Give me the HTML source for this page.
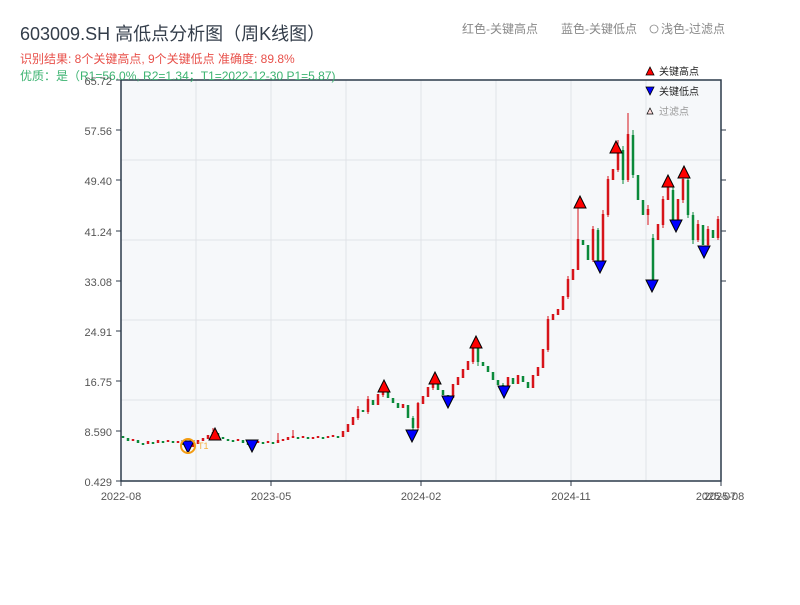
<!DOCTYPE html>
<html><head><meta charset="utf-8"><style>
body{margin:0;background:#fff;width:800px;height:600px;overflow:hidden;font-family:"Liberation Sans","Noto Sans CJK SC",sans-serif}
</style></head><body>
<svg width="800" height="600" xmlns="http://www.w3.org/2000/svg" font-family="Liberation Sans, Noto Sans CJK SC, sans-serif">
<rect x="121" y="80" width="600" height="401" fill="#f6f8fa"/>
<g stroke="#e0e3e8" stroke-width="1">
<line x1="121" y1="160" x2="721" y2="160"/><line x1="121" y1="240" x2="721" y2="240"/><line x1="121" y1="320" x2="721" y2="320"/><line x1="121" y1="400" x2="721" y2="400"/>
<line x1="196" y1="80" x2="196" y2="481"/><line x1="271" y1="80" x2="271" y2="481"/><line x1="346" y1="80" x2="346" y2="481"/><line x1="421" y1="80" x2="421" y2="481"/><line x1="496" y1="80" x2="496" y2="481"/><line x1="571" y1="80" x2="571" y2="481"/><line x1="646" y1="80" x2="646" y2="481"/>
</g>
<path fill="none" stroke="#d7141a" stroke-width="1" d="M213 428V436 M278 433V443 M293 430V438 M358 406V420 M368 396V414 M383 386V397 M418 402V430 M433 378V390 M473 344V364 M548 316V352 M568 276V299 M578 200V242 M593 226V262 M603 210V265 M608 176V217 M618 140V172 M628 113V182 M648 205V225 M663 196V228 M683 176V203 M698 220V242 M708 226V248 M718 216V240"/>
<path fill="none" stroke="#0b8a3a" stroke-width="1" d="M413 416V438 M478 346V366 M503 383V396 M598 228V267 M623 146V184 M633 130V178 M653 234V285 M673 186V224 M688 176V218 M693 212V244"/>
<path fill="none" stroke="#d7141a" stroke-width="2.5" d="M133 439V441 M148 441V444 M158 440V443 M168 440V442 M178 441V443 M193 443V447 M198 440V444 M203 438V441 M208 435V439 M213 432V436 M238 439V441 M253 442V445 M258 441V443 M268 441V443 M278 440V443 M283 439V441 M288 437V440 M293 436V438 M303 436V438 M313 437V439 M318 436V438 M328 436V438 M333 435V437 M343 431V437 M348 424V432 M353 417V425 M358 409V418 M368 399V412 M378 394V405 M383 389V395 M403 404V408 M418 403V428 M423 396V404 M428 387V397 M433 381V388 M453 384V398 M458 377V385 M463 369V378 M468 361V370 M473 347V362 M508 377V386 M518 375V384 M533 375V388 M538 367V376 M543 349V368 M548 319V350 M553 314V320 M558 309V315 M563 296V310 M568 279V297 M573 269V280 M578 239V270 M593 229V260 M603 214V262 M608 179V215 M613 169V180 M618 149V170 M628 134V180 M648 209V215 M658 224V240 M663 199V225 M668 184V200 M678 199V220 M683 179V200 M698 224V240 M708 229V245 M718 219V238"/>
<path fill="none" stroke="#0b8a3a" stroke-width="2.5" d="M123 436V438 M128 438V441 M138 440V443 M143 443V445 M153 442V444 M163 441V443 M173 441V443 M183 442V445 M188 445V447 M218 433V437 M223 437V439 M228 439V441 M233 440V442 M243 440V443 M248 443V445 M263 442V444 M273 442V444 M298 437V439 M308 437V439 M323 437V439 M338 436V438 M363 410V412 M373 400V405 M388 390V398 M393 398V403 M398 403V408 M408 405V418 M413 418V428 M438 382V390 M443 390V395 M448 395V398 M478 348V362 M483 362V366 M488 366V372 M493 372V380 M498 380V385 M503 385V387 M513 378V384 M523 376V382 M528 382V388 M583 240V245 M588 245V260 M598 230V262 M623 150V180 M633 135V175 M638 175V200 M643 200V215 M653 238V280 M673 190V220 M688 180V215 M693 215V240 M703 225V245 M713 230V238"/>
<g stroke="#2c3a4a" stroke-width="1.5" fill="none">
<polyline points="121,80 121,481 721,481 721,80 121,80"/>
</g>
<g stroke="#2c3a4a" stroke-width="1">
<line x1="116" y1="80" x2="121" y2="80"/><line x1="116" y1="130" x2="121" y2="130"/><line x1="116" y1="180" x2="121" y2="180"/><line x1="116" y1="231" x2="121" y2="231"/><line x1="116" y1="281" x2="121" y2="281"/><line x1="116" y1="331" x2="121" y2="331"/><line x1="116" y1="381" x2="121" y2="381"/><line x1="116" y1="431" x2="121" y2="431"/><line x1="116" y1="481" x2="121" y2="481"/>
<line x1="721" y1="130" x2="726" y2="130"/><line x1="721" y1="180" x2="726" y2="180"/><line x1="721" y1="231" x2="726" y2="231"/><line x1="721" y1="281" x2="726" y2="281"/>
<line x1="121" y1="481" x2="121" y2="486"/><line x1="271" y1="481" x2="271" y2="486"/><line x1="421" y1="481" x2="421" y2="486"/><line x1="571" y1="481" x2="571" y2="486"/><line x1="721" y1="481" x2="721" y2="486"/>
</g>
<text x="20" y="40" font-size="18" fill="#333d4a">603009.SH 高低点分析图（周K线图）</text>
<text x="20" y="63" font-size="12" fill="#e8504a">识别结果: 8个关键高点, 9个关键低点  准确度: 89.8%</text>
<text x="20" y="80" font-size="12" fill="#3cb371">优质：是（R1=56.0%, R2=1.34；T1=2022-12-30 P1=5.87)</text>
<text x="462" y="33" font-size="12" fill="#888">红色-关键高点</text>
<text x="561" y="33" font-size="12" fill="#888">蓝色-关键低点</text>
<circle cx="654" cy="29" r="4" fill="none" stroke="#888" stroke-width="0.8"/>
<text x="661" y="33" font-size="12" fill="#888">浅色-过滤点</text>
<g font-size="11" fill="#555" text-anchor="end">
<text x="112" y="85">65.72</text><text x="112" y="135">57.56</text><text x="112" y="185">49.40</text><text x="112" y="236">41.24</text><text x="112" y="286">33.08</text><text x="112" y="336">24.91</text><text x="112" y="386">16.75</text><text x="112" y="436">8.590</text><text x="112" y="486">0.429</text>
</g>
<g font-size="11" fill="#555" text-anchor="middle">
<text x="121" y="500">2022-08</text><text x="271" y="500">2023-05</text><text x="421" y="500">2024-02</text><text x="571" y="500">2024-11</text><text x="716" y="500">2025-07</text><text x="724" y="500">2025-08</text>
</g>
<g font-size="10">
<polygon points="646,75 650,67 654,75" fill="red" stroke="#000" stroke-width="0.8"/><text x="659" y="75" fill="#222">关键高点</text>
<polygon points="646,87 654,87 650,95" fill="#00f" stroke="#000" stroke-width="0.8"/><text x="659" y="95" fill="#222">关键低点</text>
<polygon points="647,114 650,108 653,114" fill="#fdd" stroke="#000" stroke-width="0.7"/><text x="659" y="115" fill="#999">过滤点</text>
</g>
<g fill="red" stroke="#000" stroke-width="1">
<polygon points="209,440 215,428 221,440"/><polygon points="378,392 384,380 390,392"/><polygon points="429,384 435,372 441,384"/><polygon points="470,348 476,336 482,348"/><polygon points="574,208 580,196 586,208"/><polygon points="610,153 616,141 622,153"/><polygon points="662,187 668,175 674,187"/><polygon points="678,178 684,166 690,178"/>
</g>
<g fill="#00f" stroke="#000" stroke-width="1">
<polygon points="182,441 194,441 188,453"/><polygon points="246,440 258,440 252,452"/><polygon points="406,430 418,430 412,442"/><polygon points="442,396 454,396 448,408"/><polygon points="498,386 510,386 504,398"/><polygon points="594,261 606,261 600,273"/><polygon points="646,280 658,280 652,292"/><polygon points="670,220 682,220 676,232"/><polygon points="698,246 710,246 704,258"/>
</g>
<circle cx="188" cy="446" r="7" fill="none" stroke="#f39c12" stroke-width="2"/>
<text x="198" y="449" font-size="9" fill="#f5b041">T1</text>
</svg>
</body></html>
